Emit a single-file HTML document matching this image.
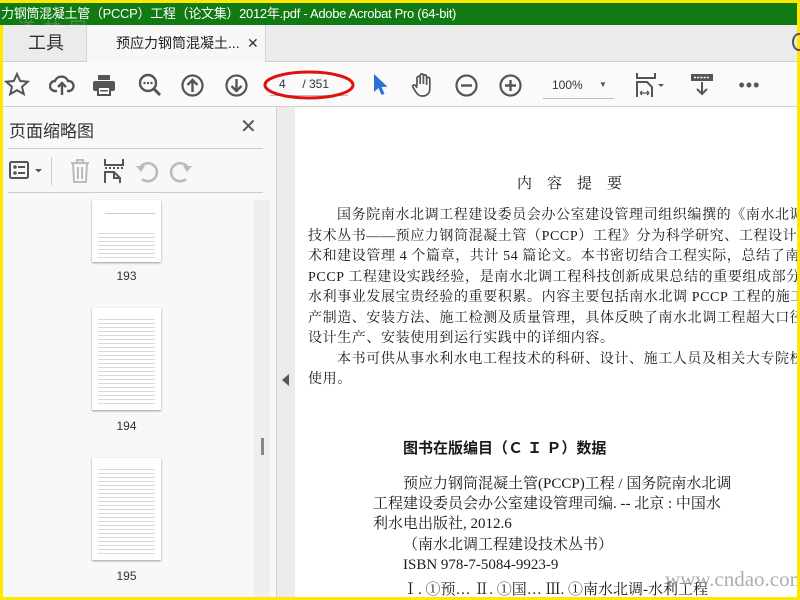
<!DOCTYPE html>
<html><head><meta charset="utf-8">
<style>
*{margin:0;padding:0;box-sizing:border-box}
body{width:800px;height:600px;overflow:hidden;background:#ffe800;position:relative;font-family:"Liberation Sans","Noto Sans CJK SC",sans-serif}
.abs{position:absolute}
#title{left:0;top:3px;width:797px;height:22px;background:#117a12;color:#fff;font-size:13px;line-height:22px;white-space:nowrap;overflow:hidden;padding-left:1px;letter-spacing:-.3px}
#tabs{left:3px;top:25px;width:794px;height:37px;background:#ebebeb;border-bottom:1px solid #cfcfcf}
#tool{left:3px;top:25px;width:83px;height:37px;color:#333;font-size:18px;line-height:37px;text-align:center;padding-left:3px}
#tab{left:86px;top:25px;width:180px;height:37px;background:#f7f7f7;border-left:1px solid #d6d6d6;border-right:1px solid #d6d6d6;font-size:14px;color:#222;line-height:37px;padding-left:29px}
#tb{left:3px;top:62px;width:794px;height:45px;background:#fafafa;border-bottom:1px solid #d0d0d0}
#panel{left:3px;top:107px;width:274px;height:490px;background:#f8f8f8;border-right:1px solid #d5d5d5}
#strip{left:277px;top:107px;width:18px;height:490px;background:#ebebeb}
#page{left:295px;top:107px;width:502px;height:490px;background:#fff;overflow:hidden}
.doc{font-family:"Liberation Serif","Noto Serif CJK SC",serif;color:#1a1a1a;white-space:nowrap;position:absolute}
.thumb{position:absolute;left:92px;width:69px;background:#fff;box-shadow:0 1px 2px #999;
background-image:repeating-linear-gradient(#fff 0 3px,#dadada 3px 4px);background-size:57px 100%;background-position:6px 0;background-repeat:no-repeat}
.lbl{position:absolute;left:92px;width:69px;text-align:center;font-size:12px;color:#333}
svg{position:absolute}
</style></head><body>
<div id="title" class="abs">力钢筒混凝土管（PCCP）工程（论文集）2012年.pdf - Adobe Acrobat Pro (64-bit)</div>
<div class="abs" style="left:18px;top:14px;font-size:17px;color:#8a9a8a;opacity:.6;letter-spacing:2px">道 林 网</div>
<div id="tabs" class="abs"></div>
<div id="tool" class="abs">工具</div>
<div id="tab" class="abs">预应力钢筒混凝土...<span style="position:absolute;left:160px;font-size:14px;color:#333">✕</span></div>
<div class="abs" style="left:792px;top:33px;width:14px;height:18px;border:2px solid #555;border-radius:50%"></div>
<div id="tb" class="abs"></div>
<svg style="left:4px;top:72px" width="26" height="26" viewBox="0 0 26 26"><path d="M13 2l3.2 7 7.6.7-5.8 5 1.8 7.4L13 18.2 6.2 22.1 8 14.7 2.2 9.7l7.6-.7z" fill="none" stroke="#555" stroke-width="2"/></svg>
<svg style="left:49px;top:73px" width="26" height="24" viewBox="0 0 26 24"><path d="M8 18H6a5 5 0 0 1 0-10 7 7 0 0 1 13 0 5 5 0 0 1 1 10h-2M13 22V11M9 14l4-4 4 4" fill="none" stroke="#555" stroke-width="2.4"/></svg>
<svg style="left:92px;top:73px" width="24" height="24" viewBox="0 0 24 24"><rect x="6" y="2" width="12" height="5" fill="#555"/><rect x="1" y="8" width="22" height="10" rx="2" fill="#555"/><rect x="6" y="14" width="12" height="8" fill="#fff" stroke="#555" stroke-width="2"/><rect x="8" y="17" width="8" height="1.5" fill="#555"/></svg>
<svg style="left:138px;top:73px" width="24" height="24" viewBox="0 0 24 24"><circle cx="10" cy="10" r="8" fill="none" stroke="#555" stroke-width="2.4"/><path d="M16 16l6 6" stroke="#555" stroke-width="3"/><circle cx="6.5" cy="10" r="1.2" fill="#555"/><circle cx="10" cy="10" r="1.2" fill="#555"/><circle cx="13.5" cy="10" r="1.2" fill="#555"/></svg>
<svg style="left:181px;top:74px" width="23" height="23" viewBox="0 0 23 23"><circle cx="11.5" cy="11.5" r="10" fill="none" stroke="#555" stroke-width="2.2"/><path d="M11.5 18V6M6.5 11l5-5 5 5" fill="none" stroke="#555" stroke-width="2.4"/></svg>
<svg style="left:225px;top:74px" width="23" height="23" viewBox="0 0 23 23"><circle cx="11.5" cy="11.5" r="10" fill="none" stroke="#555" stroke-width="2.2"/><path d="M11.5 5v12M6.5 12l5 5 5-5" fill="none" stroke="#555" stroke-width="2.4"/></svg>
<div class="abs" style="left:270px;top:72px;width:78px;height:24px;border-bottom:1px solid #bbb;font-size:12px;color:#333;line-height:24px;padding-left:9px">4&nbsp;&nbsp;&nbsp;&nbsp;&nbsp;/ 351</div>
<svg style="left:262px;top:68px" width="96" height="36" viewBox="0 0 96 36"><ellipse cx="47" cy="17" rx="44" ry="13" fill="none" stroke="#e01010" stroke-width="3"/></svg>
<svg style="left:372px;top:73px" width="16" height="24" viewBox="0 0 16 24"><path d="M2 1v18l4.5-4 3 7 3-1.3-3-6.7 6-.2z" fill="#2a72d5"/></svg>
<svg style="left:411px;top:72px" width="24" height="26" viewBox="0 0 24 26"><path d="M6 14V6a1.6 1.6 0 0 1 3.2 0v6V3.5a1.6 1.6 0 0 1 3.2 0V12V4.5a1.6 1.6 0 0 1 3.2 0V13V7a1.6 1.6 0 0 1 3.2 0v10c0 4-3 7-7 7h-1c-3 0-4.500-2-6-4l-3-5a1.6 1.6 0 0 1 2.7-1.6L6 16" fill="none" stroke="#555" stroke-width="1.7"/></svg>
<svg style="left:455px;top:74px" width="23" height="23" viewBox="0 0 23 23"><circle cx="11.5" cy="11.5" r="10" fill="none" stroke="#555" stroke-width="2.2"/><path d="M6 11.5h11" stroke="#555" stroke-width="2.4"/></svg>
<svg style="left:499px;top:74px" width="23" height="23" viewBox="0 0 23 23"><circle cx="11.5" cy="11.5" r="10" fill="none" stroke="#555" stroke-width="2.2"/><path d="M6 11.5h11M11.5 6v11" stroke="#555" stroke-width="2.4"/></svg>
<div class="abs" style="left:543px;top:73px;width:71px;height:26px;border-bottom:1px solid #bbb;font-size:12px;color:#333;line-height:24px;padding-left:9px">100%<span style="position:absolute;left:56px;top:0;font-size:8px;color:#555">▼</span></div>
<svg style="left:635px;top:72px" width="34" height="26" viewBox="0 0 34 26"><path d="M2 1v5h18V1" fill="none" stroke="#555" stroke-width="2"/><path d="M2 25V10h10l5 5v10" fill="none" stroke="#555" stroke-width="2"/><path d="M5 21h9M5 21l2-2M5 21l2 2M14 21l-2-2M14 21l-2 2" stroke="#555" stroke-width="1.3" fill="none"/><path d="M23 12h6l-3 3z" fill="#555"/></svg>
<svg style="left:690px;top:73px" width="24" height="24" viewBox="0 0 24 24"><rect x="1" y="1" width="22" height="7" fill="#555"/><path d="M4 4.5h16" stroke="#fff" stroke-width="1.4" stroke-dasharray="2 1.2"/><path d="M12 9v12M7 16l5 5 5-5" fill="none" stroke="#555" stroke-width="2"/></svg>
<div class="abs" style="left:738px;top:82px;width:22px;height:6px;background:radial-gradient(circle,#555 2.3px,transparent 2.6px) 0 0/7.3px 6px repeat-x"></div>
<div id="panel" class="abs"></div>
<div class="abs" style="left:9px;top:117px;font-size:17px;color:#333">页面缩略图</div>
<div class="abs" style="left:240px;top:114px;font-size:20px;color:#555">✕</div>
<div class="abs" style="left:8px;top:148px;width:255px;height:1px;background:#ccc"></div>
<div class="abs" style="left:8px;top:192px;width:255px;height:1px;background:#ccc"></div>
<div class="abs" style="left:51px;top:157px;width:1px;height:28px;background:#ccc"></div>
<svg style="left:9px;top:161px" width="36" height="22" viewBox="0 0 36 22"><rect x="1" y="1" width="18" height="16" rx="1.5" fill="none" stroke="#555" stroke-width="2"/><circle cx="6" cy="6" r="1.8" fill="#555"/><circle cx="6" cy="12" r="1.8" fill="#555"/><path d="M9 6h7M9 12h7" stroke="#555" stroke-width="2"/><path d="M26 8h7l-3.5 3.5z" fill="#555"/></svg>
<svg style="left:68px;top:158px" width="24" height="26" viewBox="0 0 24 26"><path d="M3 5h18M9 5V2h6v3M5 5l1 19h12l1-19M10 9v12M14 9v12" fill="none" stroke="#bbb" stroke-width="2"/></svg>
<svg style="left:104px;top:158px" width="20" height="26" viewBox="0 0 20 26"><path d="M1 1v6h18V1" fill="none" stroke="#555" stroke-width="2"/><path d="M1 10h18" stroke="#555" stroke-width="2" stroke-dasharray="2 2"/><path d="M1 25V14h9l6 6v5M10 14v6h6" fill="none" stroke="#555" stroke-width="2"/></svg>
<svg style="left:135px;top:158px" width="24" height="26" viewBox="0 0 24 26"><path d="M7 21a9 9 0 1 0-2-11" fill="none" stroke="#bbb" stroke-width="2.6"/><path d="M1 8l5 6 4-6z" fill="#bbb"/></svg>
<svg style="left:169px;top:158px" width="24" height="26" viewBox="0 0 24 26"><path d="M17 21a9 9 0 1 1 2-11" fill="none" stroke="#bbb" stroke-width="2.6"/><path d="M23 8l-5 6-4-6z" fill="#bbb"/></svg>
<div class="abs" style="left:254px;top:200px;width:16px;height:397px;background:#efefef"></div>
<div class="abs" style="left:261px;top:438px;width:3px;height:17px;background:#888"></div>
<div class="thumb" style="top:200px;height:62px;background-position:6px 30px;background-size:57px 30px"></div>
<div class="abs" style="left:105px;top:200px;width:50px;height:14px;border-bottom:1px solid #ccc"></div>
<div class="lbl" style="top:269px">193</div>
<div class="thumb" style="top:308px;height:102px;background-position:6px 8px;background-size:57px 88px"></div>
<div class="lbl" style="top:419px">194</div>
<div class="thumb" style="top:458px;height:102px;background-position:6px 8px;background-size:57px 88px"></div>
<div class="lbl" style="top:569px">195</div>
<div id="strip" class="abs"></div>
<svg style="left:282px;top:374px" width="8" height="12" viewBox="0 0 8 12"><path d="M7 0v12L0 6z" fill="#555"/></svg>
<div id="page" class="abs">
<div class="doc" style="left:222px;top:65px;font-size:15px;word-spacing:14px">内　容　提　要</div>
<div class="doc" style="left:13px;top:99px;font-size:14px;line-height:20.5px;letter-spacing:.6px">
<div style="padding-left:29px">国务院南水北调工程建设委员会办公室建设管理司组织编撰的《南水北调工程建设</div>
<div>技术丛书——预应力钢筒混凝土管（PCCP）工程》分为科学研究、工程设计、施工技</div>
<div>术和建设管理 4 个篇章，共计 54 篇论文。本书密切结合工程实际，总结了南水北调</div>
<div>PCCP 工程建设实践经验，是南水北调工程科技创新成果总结的重要组成部分，是</div>
<div>水利事业发展宝贵经验的重要积累。内容主要包括南水北调 PCCP 工程的施工设计</div>
<div>产制造、安装方法、施工检测及质量管理，具体反映了南水北调工程超大口径 PCCP</div>
<div>设计生产、安装使用到运行实践中的详细内容。</div>
<div style="padding-left:29px">本书可供从事水利水电工程技术的科研、设计、施工人员及相关大专院校师生</div>
<div>使用。</div>
</div>
<div class="doc" style="left:108px;top:330px;font-size:15px;font-weight:bold;font-family:'Liberation Sans','Noto Sans CJK SC',sans-serif">图书在版编目（Ｃ Ｉ Ｐ）数据</div>
<div class="doc" style="left:78px;top:367px;font-size:15px;line-height:20.2px">
<div style="padding-left:30px">预应力钢筒混凝土管(PCCP)工程 / 国务院南水北调</div>
<div>工程建设委员会办公室建设管理司编. -- 北京 : 中国水</div>
<div>利水电出版社, 2012.6</div>
<div style="padding-left:30px">（南水北调工程建设技术丛书）</div>
<div style="padding-left:30px">ISBN 978-7-5084-9923-9</div>
<div style="padding-left:30px;margin-top:5px">Ⅰ. ①预… Ⅱ. ①国… Ⅲ. ①南水北调-水利工程</div>
</div>
<div class="abs" style="left:370px;top:460px;font-family:'Liberation Serif',serif;font-size:21px;color:#999;opacity:.8">www.cndao.com</div>
</div>
</body></html>
